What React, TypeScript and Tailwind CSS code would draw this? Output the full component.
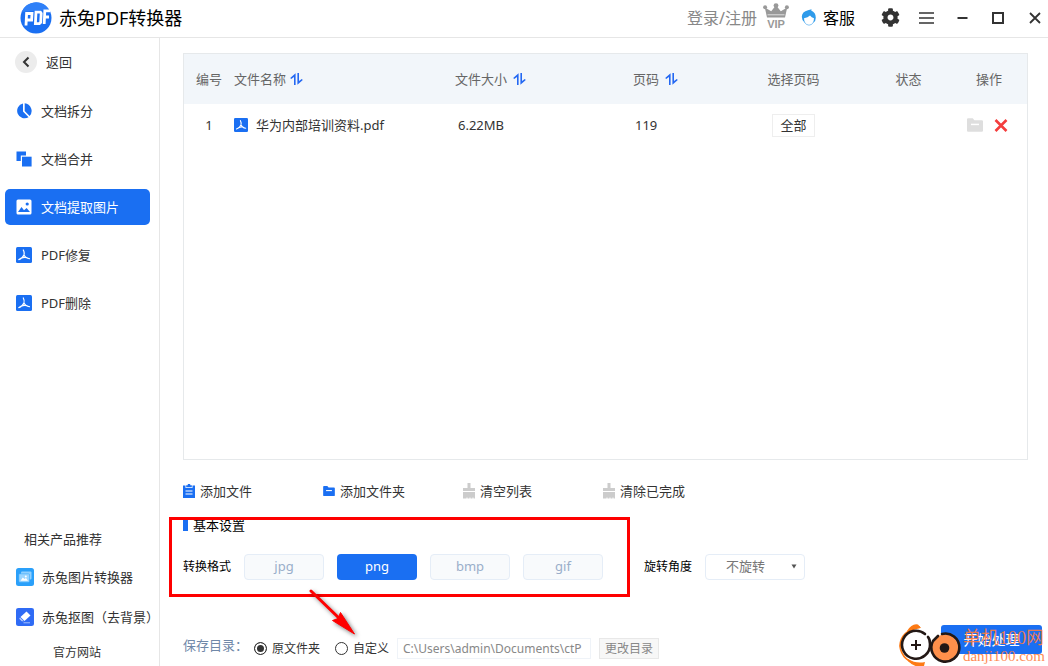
import { useState } from "react";
import type { ReactNode } from "react";
import { FaCog } from "react-icons/fa";

function PdfLogo() {
  return (
    <svg width="32" height="32" viewBox="0 0 32 32" aria-hidden="true">
      <circle cx="16" cy="16" r="15.5" fill="#1a6ff2" />
      <path d="M1.600 10 A15.500 15.500 0 0 1 29 7.500 Z" fill="#2f80f8" />
      <g fill="none" stroke="#fff" strokeWidth="2.8" strokeLinejoin="miter">
        <path d="M6 23.500 L6.600 11.500 H12 L11.600 18 H6.500" />
        <path d="M15.400 21.600 L16 10.200 H20.400 L21.200 11.400 L20.700 20.400 L19.400 21.600 Z" />
        <path d="M24.200 22 L24.800 8.800 H30 M24.600 15 H29" />
      </g>
    </svg>
  );
}

function CrownIcon() {
  return (
    <svg width="26" height="26" viewBox="0 0 26 26" aria-hidden="true">
      <g fill="#999">
        <path d="M1.800 4.500 L8.200 8.200 L11.600 4 H14.400 L17.800 8.200 L24.200 4.500 L22 14.500 H4 Z" />
        <circle cx="13" cy="2.600" r="2.400" />
        <circle cx="2.100" cy="4.200" r="2" />
        <circle cx="23.900" cy="4.200" r="2" />
      </g>
      <path d="M4.500 11.800 H21.500" stroke="#fff" strokeWidth="0.7" />
      <text x="13" y="25" textAnchor="middle" fontSize="11" fontWeight="700" fill="#999" fontFamily="Liberation Sans, sans-serif">
        VIP
      </text>
    </svg>
  );
}

function ServiceIcon() {
  return (
    <svg width="16" height="18" viewBox="0 0 16 18" aria-hidden="true">
      <path
        d="M7 1.200 L10.600 0.200 L10.200 1.600 Q14.800 3.400 14.800 8.800 Q14.800 12 12.600 13.500 L8 12 L3.600 13.500 Q0.800 11.500 0.800 7.800 Q1 2.600 7 1.200 Z"
        fill="#2f9bea"
      />
      <path d="M3 9.200 Q7 8.800 9 6.500 Q10.500 8.800 13 9.200 Q12.800 15.800 8 16 Q3.200 15.800 3 9.200 Z" fill="#fff" />
      <path d="M3.200 12.800 Q5 16.200 8 16.200 Q11 16.200 12.800 12.800" fill="none" stroke="#6bb8f1" strokeWidth="0.8" />
    </svg>
  );
}

function PieIcon() {
  return (
    <svg width="16" height="16" viewBox="0 0 16 16" aria-hidden="true" fill="#1a6ff2">
      <path d="M7 0.500 V8.500 L12.600 14.200 A7.500 7.500 0 1 1 7 0.500 Z" />
      <path d="M8.700 0.300 A7.600 7.600 0 0 1 13.600 13 L8.700 8 Z" />
    </svg>
  );
}

function MergeIcon() {
  return (
    <svg width="16" height="16" viewBox="0 0 16 16" aria-hidden="true" fill="#1a6ff2">
      <path d="M0.500 0.500 H10 V4.500 H4.800 V10 H0.500 Z" />
      <rect x="6" y="5.700" width="9.600" height="9.800" />
    </svg>
  );
}

function ImageIcon() {
  return (
    <svg width="16" height="16" viewBox="0 0 16 16" aria-hidden="true">
      <rect x="0.500" y="0.500" width="15" height="15" rx="1.500" fill="#fff" />
      <path d="M2 13 L5.500 8 L8 11.300 L10.600 9 L14 13 Z" fill="#1a6ff2" />
      <circle cx="11.200" cy="5" r="1.600" fill="#1a6ff2" />
    </svg>
  );
}

function PdfIcon({ size }: { size: number }) {
  return (
    <svg width={size} height={size} viewBox="0 0 16 16" aria-hidden="true">
      <rect width="16" height="16" rx="1.500" fill="#1a6ff2" />
      <path
        d="M7.300 3 Q8.700 5.500 7.900 8 Q6.500 11.500 2.800 12.600 M8 8 Q9.500 11.300 13.400 11.600 M5 11.200 Q8 9.900 11 10.600"
        fill="none"
        stroke="#fff"
        strokeWidth="1.200"
        strokeLinecap="round"
      />
    </svg>
  );
}

function SortIcon() {
  return (
    <svg width="13" height="12" viewBox="0 0 13 12" aria-hidden="true" fill="#2468f2">
      <path d="M4 12 V4 L1.200 6 L0.200 5 L5.600 0.200 V12 Z" />
      <path d="M7.400 0 H9 V8 L11.800 6 L12.800 7 L7.400 11.800 Z" />
    </svg>
  );
}

function ClipboardIcon() {
  return (
    <svg width="12" height="14" viewBox="0 0 12 14" aria-hidden="true">
      <path d="M0 1.500 H2.500 V4 H9.500 V1.500 H12 V14 H0 Z" fill="#1a6ff2" />
      <path d="M3.200 1.200 H4.800 V0 H7.200 V1.200 H8.800 V3.200 H3.200 Z" fill="#1a6ff2" />
      <path d="M2.500 7 H9.500 M2.500 10 H9.500" stroke="#fff" strokeWidth="1.100" />
    </svg>
  );
}

function FolderIcon({ width, color }: { width: number; color: string }) {
  return (
    <svg width={width} height={Math.round(width * 0.86)} viewBox="0 0 14 12" aria-hidden="true">
      <path d="M0 1 Q0 0 1 0 H5 L6.500 1.800 H13 Q14 1.800 14 2.800 V11 Q14 12 13 12 H1 Q0 12 0 11 Z" fill={color} />
      <path d="M3.500 5.500 H10.500" stroke="#fff" strokeWidth="1.300" />
    </svg>
  );
}

function BroomIcon() {
  return (
    <svg width="12" height="16" viewBox="0 0 12 16" aria-hidden="true" fill="#ccc">
      <path d="M4.500 0 H7.500 V5 H12 V8 H0 V5 H4.500 Z" />
      <path d="M0 9 H12 V15.500 H10.500 V14.500 H9.500 V15.500 H7.500 V14.500 H6.500 V15.500 H4.500 V14.500 H3.500 V15.500 H0 Z" />
    </svg>
  );
}

function PhotoAppIcon() {
  return (
    <svg width="18" height="18" viewBox="0 0 18 18" aria-hidden="true">
      <rect width="18" height="18" rx="2.500" fill="#2aa0fa" />
      <rect x="5" y="3.500" width="10.500" height="8" rx="1" fill="#8fd0ff" />
      <rect x="2.800" y="5.800" width="10.700" height="8.400" rx="1" fill="#9bd5ff" stroke="#2aa0fa" strokeWidth="0.500" />
      <path d="M4.500 12.800 L6.800 9.500 L8.500 11 L10 10 L12 12.800 Z" fill="#fff" />
      <circle cx="9.800" cy="8.400" r="1" fill="#fff" />
    </svg>
  );
}

function EraserAppIcon() {
  return (
    <svg width="18" height="18" viewBox="0 0 18 18" aria-hidden="true">
      <rect width="18" height="18" rx="2.500" fill="#2f6bf5" />
      <path d="M10.500 3.500 L14.500 7.500 L8.500 13 L4.500 9 Z" fill="#fff" />
      <path d="M4 9.600 L7.800 13.300 H5.800 L3.200 10.800 Z" fill="#b9cffd" />
      <path d="M7.500 14.800 H14" stroke="#a5c0fc" strokeWidth="1" />
    </svg>
  );
}

const navItems: { label: string; icon: ReactNode }[] = [
  { label: "文档拆分", icon: <PieIcon /> },
  { label: "文档合并", icon: <MergeIcon /> },
  { label: "文档提取图片", icon: <ImageIcon /> },
  { label: "PDF修复", icon: <PdfIcon size={16} /> },
  { label: "PDF删除", icon: <PdfIcon size={16} /> },
];

const actions: { label: string; icon: ReactNode }[] = [
  { label: "添加文件", icon: <ClipboardIcon /> },
  { label: "添加文件夹", icon: <FolderIcon width={12} color="#1a6ff2" /> },
  { label: "清空列表", icon: <BroomIcon /> },
  { label: "清除已完成", icon: <BroomIcon /> },
];

const formats = ["jpg", "png", "bmp", "gif"];

function TitleBar() {
  return (
    <header className="flex h-[38px] shrink-0 items-center border-b border-[#e6e6e6] pr-[7px] pb-[2px] pl-5">
      <PdfLogo />
      <h1 className="ml-[7px] flex-1 text-lg leading-6 text-black">赤兔PDF转换器</h1>
      <button className="text-base text-[#888]">登录/注册</button>
      <button aria-label="VIP" className="mb-1 ml-[6px]">
        <CrownIcon />
      </button>
      <button className="ml-3 flex items-center gap-[6px] text-base text-black">
        <ServiceIcon />
        客服
      </button>
      <button aria-label="设置" className="ml-[26px] text-[#333]">
        <FaCog size={19} />
      </button>
      <button aria-label="菜单" className="ml-[19px]">
        <svg width="15" height="12" viewBox="0 0 15 12" stroke="#333" strokeWidth="1.500">
          <path d="M0 1 H15 M0 6 H15 M0 11 H15" />
        </svg>
      </button>
      <button aria-label="最小化" className="ml-[23px]">
        <svg width="11" height="12" viewBox="0 0 11 12" stroke="#333" strokeWidth="2">
          <path d="M0.500 6 H10.500" />
        </svg>
      </button>
      <button aria-label="最大化" className="ml-6">
        <svg width="12" height="12" viewBox="0 0 12 12" fill="none" stroke="#333" strokeWidth="2">
          <rect x="1" y="1" width="10" height="10" />
        </svg>
      </button>
      <button aria-label="关闭" className="ml-[25px]">
        <svg width="12" height="12" viewBox="0 0 12 12" stroke="#333" strokeWidth="1.800">
          <path d="M1 1 L11 11 M11 1 L1 11" />
        </svg>
      </button>
    </header>
  );
}

function Sidebar() {
  const [active, setActive] = useState("文档提取图片");
  return (
    <aside className="flex w-40 shrink-0 flex-col border-r border-[#e6e6e6] text-[#333]">
      <button className="mt-[13px] ml-[15px] flex items-center gap-[9px] self-start">
        <span className="flex size-[22px] items-center justify-center rounded-full bg-[#ececec]">
          <svg width="8" height="12" viewBox="0 0 8 12" fill="none" stroke="#333" strokeWidth="2">
            <path d="M6.500 1.500 L2 6 L6.500 10.500" />
          </svg>
        </span>
        返回
      </button>
      <nav className="mt-5 flex flex-1 flex-col gap-3 pr-[9px] pl-[5px]">
        {navItems.map((item) => (
          <button
            key={item.label}
            onClick={() => setActive(item.label)}
            className={
              item.label === active
                ? "flex h-9 items-center gap-[9px] rounded-[5px] bg-[#1a6ff2] pl-[11px] text-white"
                : "flex h-9 items-center gap-[9px] rounded-[5px] pl-[11px]"
            }
          >
            {item.icon}
            {item.label}
          </button>
        ))}
      </nav>
      <h2 className="pl-6">相关产品推荐</h2>
      <a href="#photo" className="mt-[18px] flex items-center gap-2 pl-4 whitespace-nowrap">
        <PhotoAppIcon />
        赤兔图片转换器
      </a>
      <a href="#cutout" className="mt-5 flex items-center gap-2 pl-4 whitespace-nowrap">
        <EraserAppIcon />
        赤兔抠图（去背景）
      </a>
      <a href="#site" className="mt-4 mb-[3px] pl-[53px] text-xs leading-5">
        官方网站
      </a>
    </aside>
  );
}

function SortHeader({ label, gap }: { label: string; gap: "tight" | "wide" }) {
  return (
    <button className={gap === "tight" ? "flex items-center gap-1" : "flex items-center gap-[6px]"}>
      {label}
      <SortIcon />
    </button>
  );
}

function FileTable() {
  return (
    <div className="flex-1 border border-[#e6e9eb]">
      <table className="w-full table-fixed text-left text-[#333]">
        <colgroup>
          <col className="w-[50px]" />
          <col />
          <col className="w-[178px]" />
          <col className="w-[101px]" />
          <col className="w-[119px]" />
          <col className="w-[111px]" />
          <col className="w-[63px]" />
        </colgroup>
        <thead className="bg-[#f2f6fa] text-[#666]">
          <tr className="h-[50px]">
            <th className="text-center font-normal">编号</th>
            <th className="font-normal"><SortHeader label="文件名称" gap="tight" /></th>
            <th className="font-normal"><SortHeader label="文件大小" gap="wide" /></th>
            <th className="font-normal"><SortHeader label="页码" gap="wide" /></th>
            <th className="text-center font-normal">选择页码</th>
            <th className="text-center font-normal">状态</th>
            <th className="pl-3 font-normal">操作</th>
          </tr>
        </thead>
        <tbody>
          <tr className="h-[42px]">
            <td className="text-center">1</td>
            <td>
              <span className="flex items-center gap-2">
                <PdfIcon size={14} />
                华为内部培训资料.pdf
              </span>
            </td>
            <td className="pl-[3px]">6.22MB</td>
            <td className="pl-[2px]">119</td>
            <td className="text-center">
              <button className="h-[23px] w-[43px] border border-[#eee]">全部</button>
            </td>
            <td />
            <td>
              <span className="flex items-center gap-[11px] pl-[3px]">
                <button aria-label="打开文件夹">
                  <FolderIcon width={16} color="#dedede" />
                </button>
                <button aria-label="删除">
                  <svg width="14" height="13" viewBox="0 0 14 13" stroke="#f43d3d" strokeWidth="2.600">
                    <path d="M1.500 1 L12.500 12 M12.500 1 L1.500 12" />
                  </svg>
                </button>
              </span>
            </td>
          </tr>
        </tbody>
      </table>
    </div>
  );
}

function Settings() {
  const [format, setFormat] = useState("png");
  return (
    <section className="relative mt-[14px]">
      <h2 className="flex h-5 items-center gap-[5px] text-black">
        <span className="h-3 w-[5px] bg-[#1a6ff2]" />
        基本设置
      </h2>
      <div className="mt-[19px] flex items-center text-xs text-black">
        <span className="mr-[13px]">转换格式</span>
        <div className="flex gap-[13px] text-[13px]">
          {formats.map((name) => (
            <button
              key={name}
              aria-pressed={name === format}
              onClick={() => setFormat(name)}
              className={
                name === format
                  ? "h-[26px] w-20 rounded bg-[#1a6ff2] text-white"
                  : "h-[26px] w-20 rounded border border-[#e5edf7] bg-[#f8fafc] text-[#9aaeca]"
              }
            >
              {name}
            </button>
          ))}
        </div>
        <label htmlFor="rotation" className="mr-[13px] ml-[41px]">旋转角度</label>
        <div className="relative">
          <select
            id="rotation"
            className="h-[26px] w-[100px] appearance-none rounded border border-[#e5edf7] bg-white pl-5 text-[13px] text-[#777]"
          >
            <option>不旋转</option>
            <option>90°</option>
            <option>180°</option>
            <option>270°</option>
          </select>
          <svg className="pointer-events-none absolute top-[10px] right-2" width="6" height="5" viewBox="0 0 6 5" fill="#555">
            <path d="M0.500 0.500 H5.500 L3 4.500 Z" />
          </svg>
        </div>
      </div>
      <div className="pointer-events-none absolute top-[2px] -left-[14px] h-20 w-[461px] border-3 border-[#fe0000]" />
      <svg
        className="pointer-events-none absolute top-[70px] left-[122px] drop-shadow-[2px_2px_2px_rgba(0,0,0,0.5)]"
        width="60"
        height="55"
        viewBox="0 0 60 55"
        aria-hidden="true"
      >
        <path d="M6 6 L36 35" stroke="#fe0000" strokeWidth="3" strokeLinecap="round" />
        <path d="M49.500 49 L27.500 35.500 L33 33.500 L35.500 27.500 Z" fill="#fe0000" stroke="#fe0000" strokeLinejoin="round" />
      </svg>
    </section>
  );
}

function Watermark() {
  return (
    <div className="pointer-events-none absolute -top-px right-[-3px] flex items-center">
      <svg width="64" height="44" viewBox="0 0 64 44" aria-hidden="true">
        <path d="M22 3 Q3 7 2 22 Q4 38 23 41" fill="none" stroke="#fd7a14" strokeWidth="1.800" />
        <path d="M9 7 Q14 -1 20 0.500 L23 4 Q15 4 9 9 Z M10 37 Q17 44.500 26 42 L27 38 Q18 40 10 35 Z" fill="#fd7a14" />
        <circle cx="18.500" cy="21" r="14" fill="#fff" />
        <path d="M27 10 A14 14 0 1 0 32 20 Q32 15 30 13" fill="none" stroke="#231815" strokeWidth="2.600" strokeLinecap="round" />
        <path d="M13 21 H23 M18 16 V26" stroke="#231815" strokeWidth="2" />
        <circle cx="47" cy="24" r="13.500" fill="#ff904b" />
        <path d="M44 10 A14 14 0 1 1 35 17 M40 12 L35 17" fill="none" stroke="#231815" strokeWidth="2.600" strokeLinecap="round" />
        <circle cx="46.500" cy="24" r="4.800" fill="#231815" />
      </svg>
      <div className="ml-px font-['Liberation_Serif','Noto_Sans_CJK_SC',serif] whitespace-nowrap text-[#ff7c3e]/90">
        <p className="text-lg leading-5">单机100网</p>
        <p className="text-[15px] leading-4">danji100.com</p>
      </div>
    </div>
  );
}

function SaveBar() {
  return (
    <footer className="relative mt-[45px] flex items-start justify-between pb-[7px] text-xs">
      <div className="flex h-[34px] items-end text-[#333]">
        <span className="mb-[6px] w-[71px] text-[13px] leading-4 text-[#7088a8]">保存目录：</span>
        <label className="flex h-[21px] items-center gap-[5px]">
          <input
            type="radio"
            name="target"
            defaultChecked
            className="size-[13px] appearance-none rounded-full border border-[#333] checked:bg-[#333] checked:shadow-[inset_0_0_0_2px_#fff]"
          />
          原文件夹
        </label>
        <label className="ml-[15px] flex h-[21px] items-center gap-[5px]">
          <input
            type="radio"
            name="target"
            className="size-[13px] appearance-none rounded-full border border-[#333] checked:bg-[#333] checked:shadow-[inset_0_0_0_2px_#fff]"
          />
          自定义
        </label>
        <input
          type="text"
          aria-label="保存目录"
          defaultValue="C:\Users\admin\Documents\ctP"
          className="ml-2 h-[21px] w-[194px] border border-[#eff3f8] px-[5px] text-[#888]"
        />
        <button className="ml-2 h-[21px] w-[60px] border border-[#e8e8e8] bg-[#f7f7f7] text-[#888]">更改目录</button>
      </div>
      <button className="h-[29px] w-[101px] rounded-[3px] bg-[#1a6ff2] text-sm text-white">开始处理</button>
      <Watermark />
    </footer>
  );
}

export default function App() {
  return (
    <div className="flex min-h-screen flex-col overflow-hidden bg-white font-['Noto_Sans','Noto_Sans_CJK_SC',sans-serif] text-[13px] leading-5">
      <TitleBar />
      <div className="flex flex-1">
        <Sidebar />
        <main className="flex min-w-0 flex-1 flex-col pt-[15px] pr-[6px] pl-[23px]">
          <div className="flex flex-1 flex-col pr-[14px]">
            <FileTable />
            <div className="mt-[21px] flex text-[#333]">
              {actions.map((action) => (
                <div key={action.label} className="w-[140px]">
                  <button className="flex h-5 items-center gap-[5px]">
                    {action.icon}
                    {action.label}
                  </button>
                </div>
              ))}
            </div>
            <Settings />
          </div>
          <SaveBar />
        </main>
      </div>
    </div>
  );
}
